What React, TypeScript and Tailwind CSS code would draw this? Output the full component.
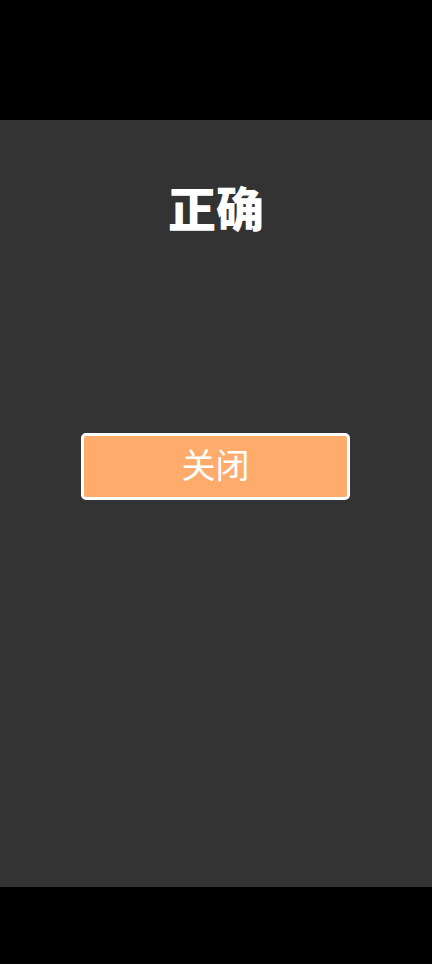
import React from "react";

export default function App() {
  return (
    <div
      className="w-[432px] h-[964px] bg-black flex flex-col"
      style={{ fontFamily: '"Noto Sans CJK SC", "Noto Sans", sans-serif' }}
    >
      <div className="h-[120px] shrink-0" />
      <div className="h-[767px] shrink-0 bg-[#333333] flex flex-col items-center pt-[62px]">
        <h1 className="text-[48px] leading-[48px] font-black text-white">正确</h1>
        <button className="mt-[203px] ml-[-1px] w-[269px] h-[67px] bg-[#FEAB6B] border-[3px] border-white rounded-[5px] flex items-center justify-center pb-[6px] text-white text-[34px] leading-none">
          关闭
        </button>
      </div>
      <div className="flex-1" />
    </div>
  );
}
